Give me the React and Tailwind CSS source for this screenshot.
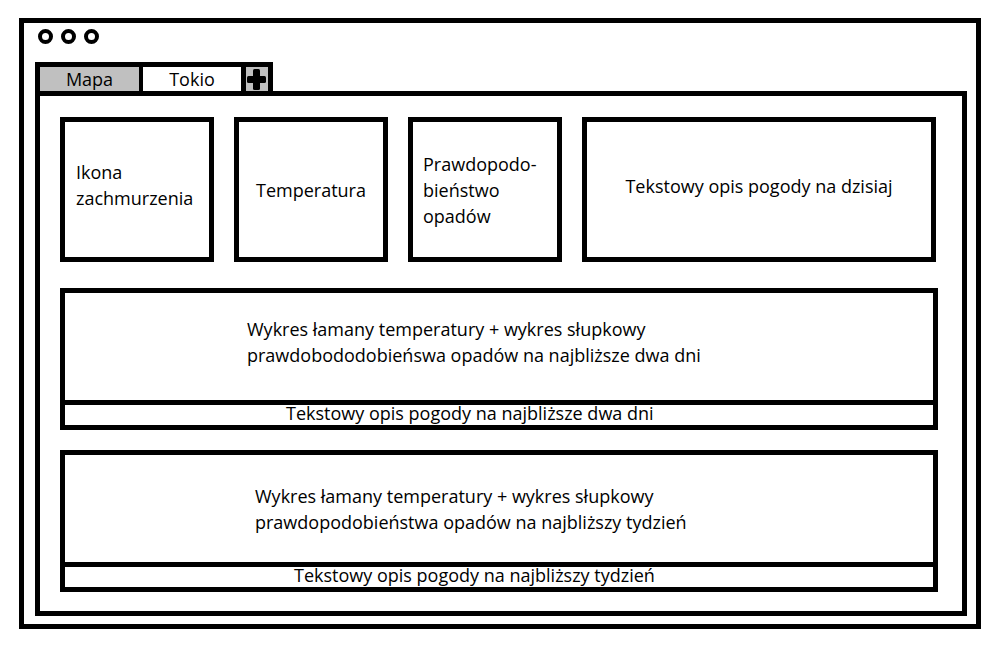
import React from "react";

function Dot() {
  return <div className="w-[15px] h-[15px] rounded-full border-[4px] border-black" />;
}

function PlusIcon() {
  return (
    <svg width="22" height="24" viewBox="0 0 22 24" aria-hidden="true">
      <rect x="7" y="2" width="7" height="21" rx="1.5" fill="#000" />
      <rect x="1" y="9" width="19" height="7" rx="1.5" fill="#000" />
    </svg>
  );
}

function ForecastBox({ line1, line2, footer, textPad, bodyPad, footPad }) {
  return (
    <div className="w-[878px] h-[142px] border-[5px] border-black flex flex-col">
      <div className={`h-[112px] border-b-[5px] border-black flex items-center leading-[26px] ${textPad} ${bodyPad}`}>
        <p>
          {line1}
          <br />
          {line2}
        </p>
      </div>
      <div className={`h-[20px] whitespace-nowrap leading-[16px] ${footPad}`}>{footer}</div>
    </div>
  );
}

export default function App() {
  return (
    <div className="min-h-screen bg-white pt-[18px] pl-[19px] font-['Open_Sans',sans-serif] text-[18px] text-black">
      <div className="w-[962px] h-[611px] border-[5px] border-black flex flex-col">
        {/* window dots */}
        <div className="flex gap-[8px] pl-[14px] pt-[6px]">
          <Dot />
          <Dot />
          <Dot />
        </div>

        {/* tabs */}
        <div className="mt-[18px] ml-[11px] w-[238px] h-[29px] border-[5px] border-b-0 border-black flex">
          <div className="w-[103px] bg-[#c0c0c0] border-r-[4px] border-black flex items-center justify-center leading-none">
            Mapa
          </div>
          <div className="w-[103px] bg-white border-r-[5px] border-black flex items-center justify-center leading-none">
            Tokio
          </div>
          <div className="w-[22px] bg-[#c0c0c0] flex items-center justify-center">
            <PlusIcon />
          </div>
        </div>

        {/* panel */}
        <div className="ml-[11px] w-[932px] h-[525px] border-[5px] border-black pt-[21px] pl-[20px]">
          <div className="flex gap-5 h-[145px]">
            <div className="w-[154px] border-[5px] border-black flex items-center pl-[11px] pb-[9px] leading-[26px]">
              <p>
                Ikona
                <br />
                zachmurzenia
              </p>
            </div>
            <div className="w-[154px] border-[5px] border-black flex items-center justify-center leading-[26px]">
              Temperatura
            </div>
            <div className="w-[154px] border-[5px] border-black flex items-center pl-[10px] leading-[26px]">
              <p>
                Prawdopodo-
                <br />
                bieństwo
                <br />
                opadów
              </p>
            </div>
            <div className="w-[354px] border-[5px] border-black flex items-center justify-center pb-[8px] leading-[26px]">
              Tekstowy opis pogody na dzisiaj
            </div>
          </div>

          <div className="mt-[26px]">
            <ForecastBox
              line1="Wykres łamany temperatury + wykres słupkowy"
              line2="prawdobododobieńswa opadów na najbliższe dwa dni"
              footer="Tekstowy opis pogody na najbliższe dwa dni"
              textPad="pl-[182px]"
              bodyPad="pb-[9px]"
              footPad="pl-[221px]"
            />
          </div>

          <div className="mt-[20px]">
            <ForecastBox
              line1="Wykres łamany temperatury + wykres słupkowy"
              line2="prawdopodobieństwa opadów na najbliższy tydzień"
              footer="Tekstowy opis pogody na najbliższy tydzień"
              textPad="pl-[190px]"
              bodyPad="pb-0"
              footPad="pl-[229px]"
            />
          </div>
        </div>
      </div>
    </div>
  );
}
